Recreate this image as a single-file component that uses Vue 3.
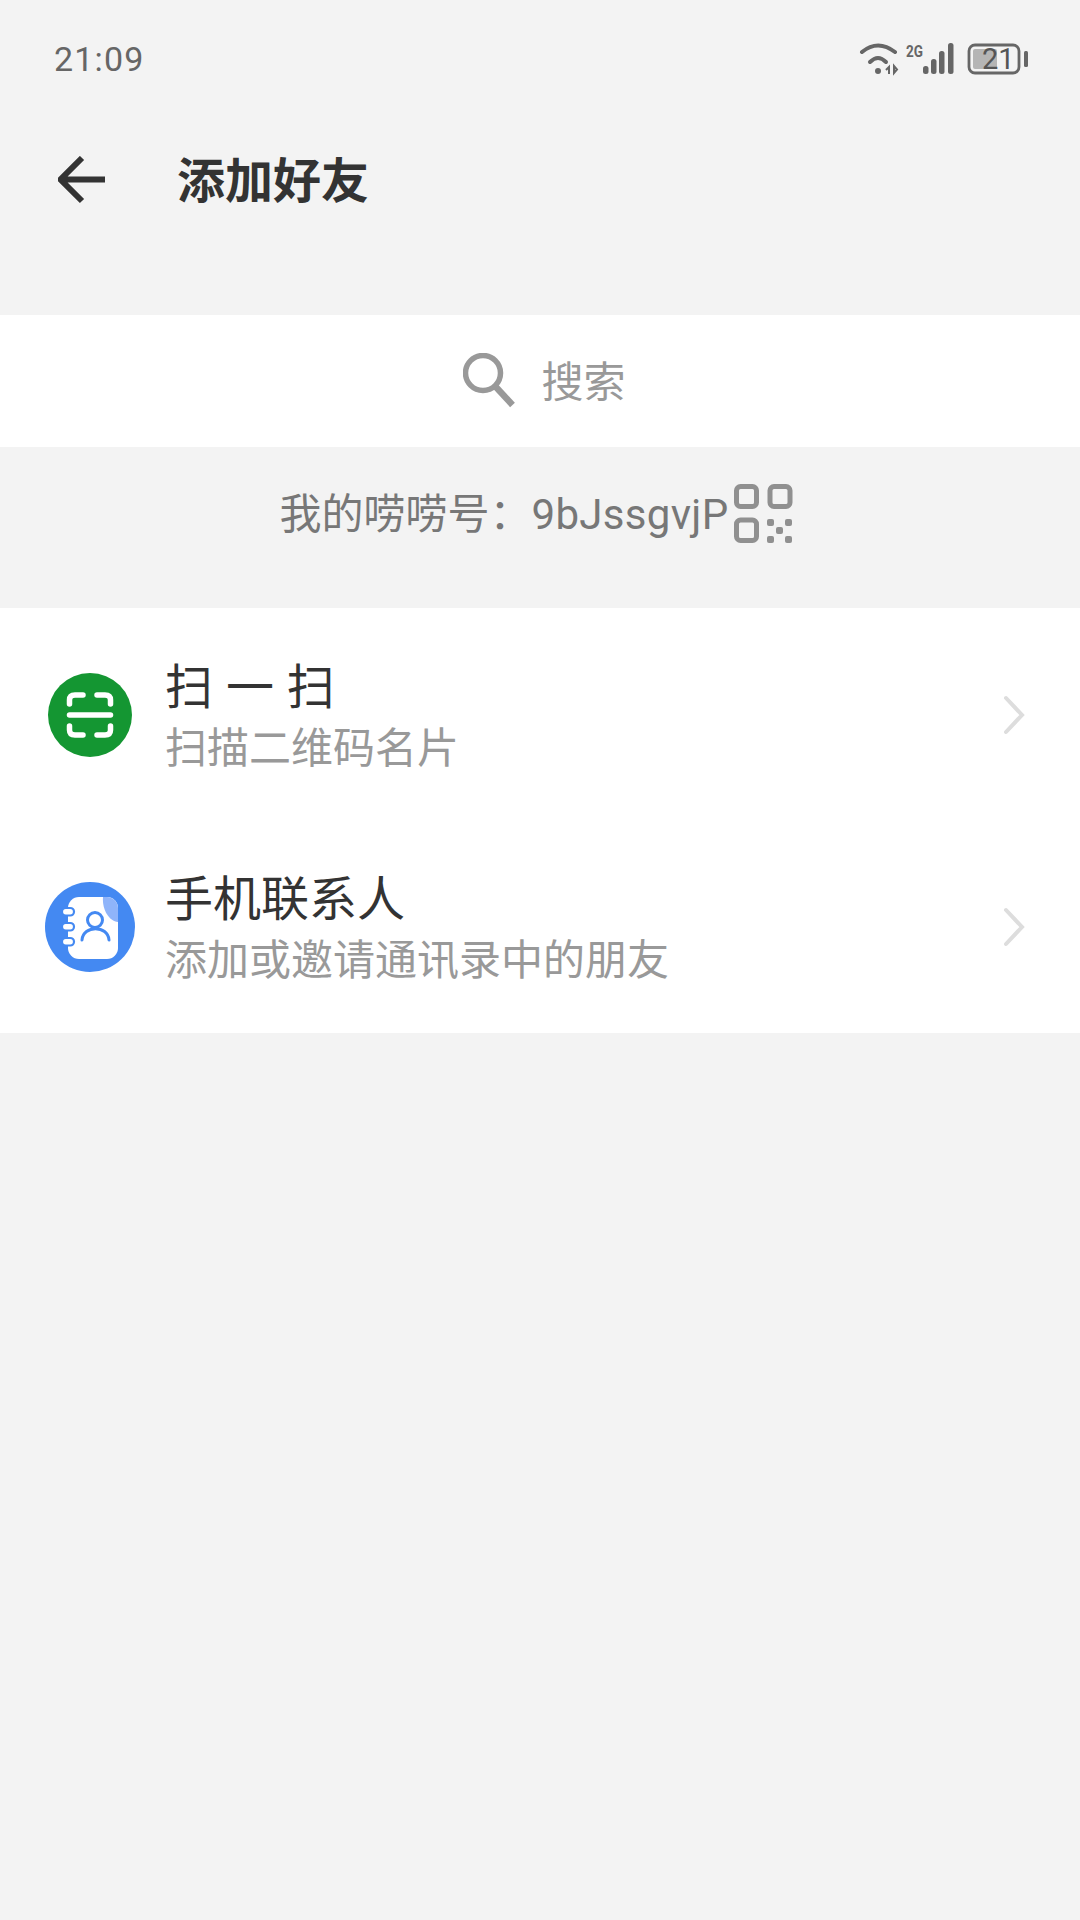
<template>
  <div class="page">
    <div class="status-bar">
      <span class="time">21:09</span>
      <svg class="status-icons" width="170" height="36" viewBox="0 0 170 36">
        <g fill="none" stroke="#666" stroke-width="4" stroke-linecap="round">
          <path d="M4 11 Q20 -2 37 11" />
          <path d="M12 21 Q20 13 28 21" />
        </g>
        <circle cx="20" cy="30" r="3" fill="#666" />
        <path d="M31 33V26L28 29M36 25v7l3-3.500z" fill="none" stroke="#666" stroke-width="2" />
        <text x="48" y="16" class="net" textLength="17" lengthAdjust="spacingAndGlyphs">2G</text>
        <g fill="#666">
          <rect x="65" y="25" width="5.500" height="8" rx="2.500" />
          <rect x="73" y="18" width="5.500" height="15" rx="2.500" />
          <rect x="81" y="10" width="5.500" height="23" rx="2.500" />
          <rect x="90" y="2" width="5.500" height="31" rx="2.500" />
        </g>
        <rect x="111" y="4" width="50" height="28" rx="6" fill="none" stroke="#666" stroke-width="2.800" />
        <rect x="115" y="8" width="24" height="20" rx="2" fill="#b5b5b5" />
        <rect x="166" y="10" width="4" height="16" rx="1.500" fill="#666" />
        <text x="124" y="28" class="level">21</text>
      </svg>
    </div>

    <div class="header">
      <svg class="back" width="48" height="48" viewBox="0 0 48 48">
        <path d="M47 23.500H4M24 2 2.500 23.500 24 45" fill="none" stroke="#333" stroke-width="6" />
      </svg>
      <span class="title">添加好友</span>
    </div>

    <div class="search">
      <svg width="53" height="56" viewBox="0 0 53 56">
        <circle cx="20" cy="20" r="17.500" fill="none" stroke="#999" stroke-width="5.500" />
        <path d="M32 33 49.500 52" fill="none" stroke="#999" stroke-width="6.500" />
      </svg>
      <span class="search-label">搜索</span>
    </div>

    <div class="my-id">
      <span class="my-id-text">我的唠唠号：<span class="my-id-code">9bJssgvjP</span></span>
      <svg width="59" height="59" viewBox="0 0 59 59">
        <g fill="none" stroke="#909090" stroke-width="5">
          <rect x="2.500" y="2.500" width="20" height="20" rx="4" />
          <rect x="36" y="2.500" width="20" height="20" rx="4" />
          <rect x="2.500" y="36" width="20" height="20.500" rx="4" />
        </g>
        <g fill="#909090">
          <rect x="33" y="35" width="7" height="7" rx="2" />
          <rect x="51" y="35" width="7" height="7" rx="2" />
          <rect x="42" y="43" width="7" height="7" rx="2" />
          <rect x="33" y="52" width="7" height="7" rx="2" />
          <rect x="51" y="52" width="7" height="7" rx="2" />
        </g>
      </svg>
    </div>

    <div class="list">
      <div v-for="item in items" :key="item.title" class="row">
        <div class="row-icon">
          <svg v-if="item.icon === 'scan'" width="84" height="84" viewBox="0 0 84 84">
            <circle cx="42" cy="42" r="42" fill="#149632" />
            <g fill="none" stroke="#fff" stroke-width="5.500" stroke-linecap="round">
              <path d="M35 22H27Q21.500 22 21.500 27V31" />
              <path d="M49 22H57Q62.500 22 62.500 27V31" />
              <path d="M35 62H27Q21.500 62 21.500 57V53" />
              <path d="M49 62H57Q62.500 62 62.500 57V53" />
              <path d="M21.500 42H62.500" />
            </g>
          </svg>
          <svg v-else width="90" height="90" viewBox="0 0 90 90">
            <circle cx="45" cy="45" r="45" fill="#4489f2" />
            <rect x="23" y="15" width="50" height="62" rx="11" fill="#fff" />
            <path d="M58 15h4c6 0 11 5 11 11v14C64 39 57 28 58 15z" fill="#8fb4fa" />
            <g fill="#fff" stroke="#4489f2" stroke-width="2.200">
              <rect x="17" y="26" width="12" height="7.500" rx="3.700" />
              <rect x="17" y="41" width="12" height="7.500" rx="3.700" />
              <rect x="17" y="56" width="12" height="7.500" rx="3.700" />
            </g>
            <circle cx="50" cy="38" r="7.500" fill="none" stroke="#4489f2" stroke-width="3" />
            <path d="M37 58C38 43 63 43 64 58" fill="none" stroke="#4489f2" stroke-width="3" stroke-linecap="round" />
          </svg>
        </div>
        <div class="row-text">
          <div class="row-title">{{ item.title }}</div>
          <div class="row-sub">{{ item.sub }}</div>
        </div>
        <svg class="chevron" width="22" height="40" viewBox="0 0 22 40">
          <path d="M3 3 19 20 3 37" fill="none" stroke="#ddd" stroke-width="4" stroke-linecap="round" />
        </svg>
      </div>
    </div>
  </div>
</template>

<script setup>
const items = [
  { icon: 'scan', title: '扫 一 扫', sub: '扫描二维码名片' },
  { icon: 'contacts', title: '手机联系人', sub: '添加或邀请通讯录中的朋友' }
]
</script>

<style scoped>
.page {
  width: 1080px;
  height: 1920px;
  overflow: hidden;
  background: #f3f3f3;
  display: flex;
  flex-direction: column;
  font-family: Roboto, "Noto Sans CJK SC", sans-serif;
}

.status-bar {
  height: 118px;
  padding: 0 52px 0 54px;
  box-sizing: border-box;
  display: flex;
  align-items: center;
  justify-content: space-between;
}

.time {
  font-size: 34px;
  color: #666;
  letter-spacing: 1.200px;
}

.net {
  font-size: 17px;
  font-weight: 700;
  fill: #666;
}

.level {
  font-size: 29px;
  fill: #555;
}

.header {
  height: 119px;
  padding-left: 58px;
  display: flex;
  align-items: center;
}

.back {
  margin-top: 4px;
}

.title {
  margin-left: 71px;
  padding-bottom: 2px;
  font-size: 48px;
  font-weight: 700;
  color: #333;
}

.search {
  margin-top: 78px;
  height: 132px;
  padding-left: 9px;
  background: #fff;
  display: flex;
  align-items: center;
  justify-content: center;
  gap: 25px;
  font-size: 42px;
  color: #999;
}

.search-label {
  padding-bottom: 6px;
}

.my-id {
  height: 161px;
  padding: 0 7px 28px 0;
  box-sizing: border-box;
  display: flex;
  align-items: center;
  justify-content: center;
  gap: 6px;
  font-size: 42px;
  color: #777;
}

.my-id-text {
  padding-bottom: 7px;
}

.my-id-code {
  letter-spacing: 0.300px;
}

.list {
  background: #fff;
  padding-top: 1px;
}

.row {
  height: 212px;
  display: flex;
  align-items: center;
}

.row-icon {
  width: 90px;
  margin: 0 30px 0 45px;
  display: flex;
  justify-content: center;
}

.row-text {
  flex: 1;
  padding-top: 7px;
}

.row-title {
  font-size: 48px;
  line-height: 60px;
  color: #333;
  word-spacing: 1px;
}

.row-sub {
  font-size: 42px;
  line-height: 61px;
  color: #999;
}

.chevron {
  margin-right: 55px;
}
</style>

<style>
body {
  background: #f3f3f3;
}
</style>
